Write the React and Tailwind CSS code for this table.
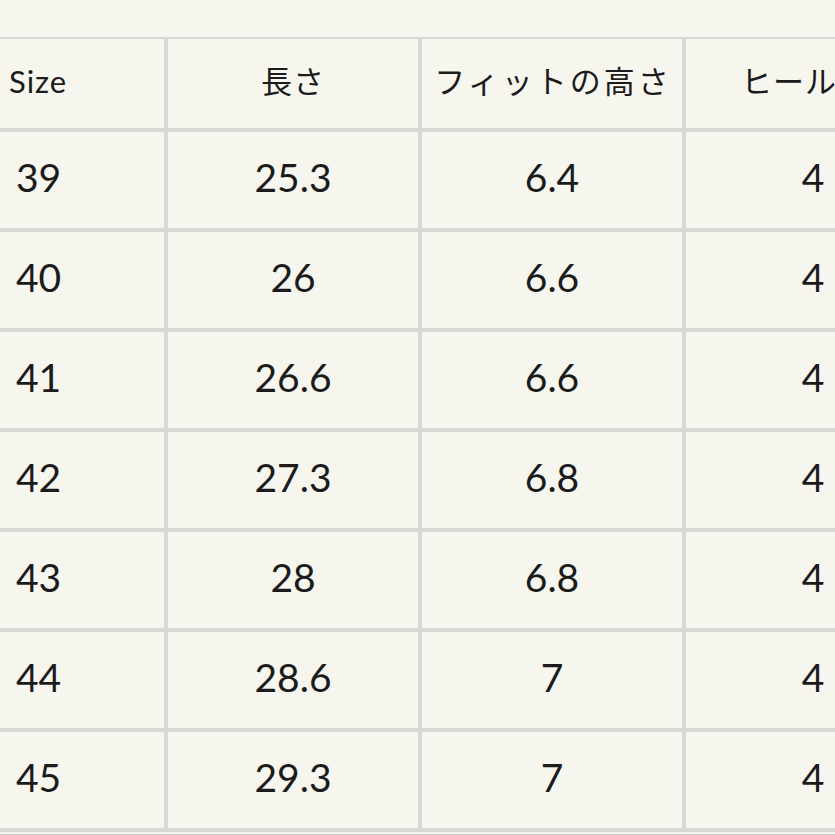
import React from "react";

const header = ["Size", "長さ", "フィットの高さ", "ヒール高さ"];
const headPad = ["pl-[9px]", "justify-center", "justify-center tracking-[3px] pl-[2px]", "justify-center pl-[16px]"];

const rows = [
  ["39", "25.3", "6.4", "4"],
  ["40", "26", "6.6", "4"],
  ["41", "26.6", "6.6", "4"],
  ["42", "27.3", "6.8", "4"],
  ["43", "28", "6.8", "4"],
  ["44", "28.6", "7", "4"],
  ["45", "29.3", "7", "4"],
];

const font = { fontFamily: '"Lato", "Noto Sans CJK JP", sans-serif' };

export default function App() {
  return (
    <div className="w-[835px] h-[835px] overflow-hidden bg-[#f6f5ee] pt-[37px] text-[#1b1b1b]" style={font}>
      {/* table */}
      <div className="w-[940px] grid grid-cols-[164px_250px_260px_254px] grid-rows-[89px_repeat(7,96px)] gap-[4px] bg-[#d8d8d4] border-t-[2px] border-[#d8d8d4] pb-[4px]">
        {header.map((h, i) => (
          <div
            key={h}
            className={"flex items-center bg-[#f6f5ee] text-[31px] tracking-[1px] pb-[4px] " + headPad[i]}
          >
            {h}
          </div>
        ))}
        {rows.map((r) =>
          r.map((c, i) => (
            <div
              key={r[0] + "-" + i}
              className={
                "flex items-center bg-[#f6f5ee] text-[39px] pb-[5px] " +
                (i === 0 ? "pl-[16px]" : "justify-center")
              }
            >
              {c}
            </div>
          ))
        )}
      </div>
      {/* bottom rule */}
      <div className="mt-[2px] h-[3px] bg-[#c9c9c5]" />
    </div>
  );
}
